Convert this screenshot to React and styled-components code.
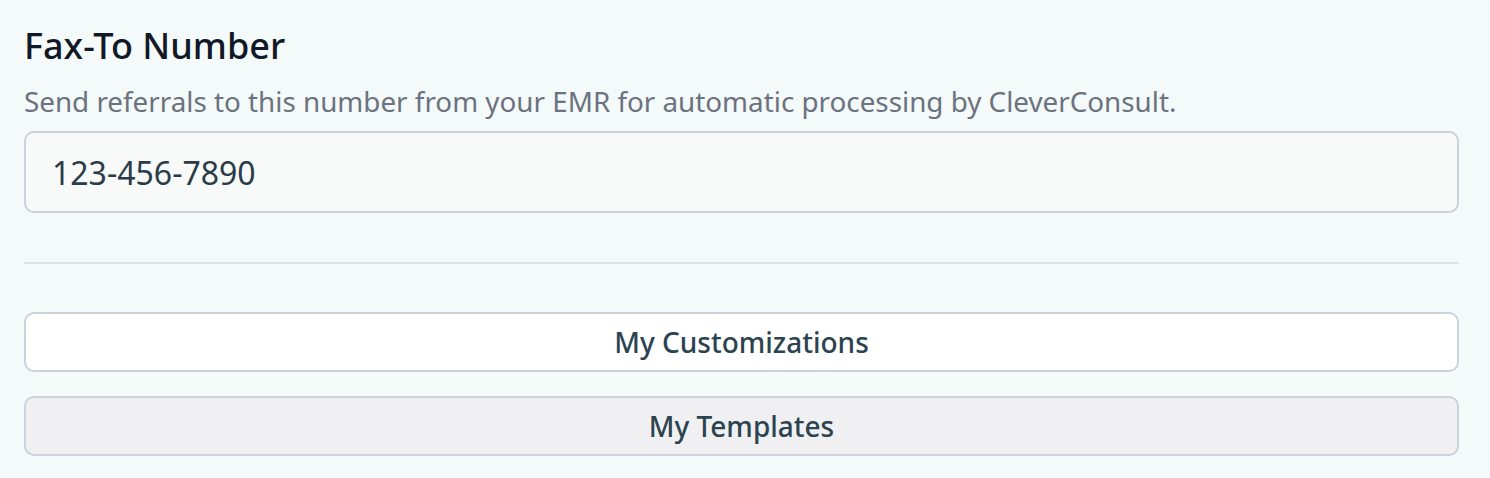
import React from "react";
import styled, { createGlobalStyle } from "styled-components";

const Global = createGlobalStyle`
  html, body { margin: 0; padding: 0; background: #f4f9f9; }
  body { font-family: "Noto Sans", "Open Sans", sans-serif; }
`;

const Page = styled.div`
  padding: 22px 31px 0 24px;
  display: flex;
  flex-direction: column;
`;

const Title = styled.h2`
  margin: 0;
  font-size: 36px;
  line-height: 48px;
  font-weight: 500;
  color: #111827;
`;

const Subtitle = styled.p`
  margin: 11px 0 0;
  font-size: 27.8px;
  line-height: 40px;
  color: #6b7280;
`;

const Field = styled.input`
  margin-top: 10px;
  box-sizing: border-box;
  height: 82px;
  width: 100%;
  border: 2px solid #cdd1d9;
  border-radius: 10px;
  background: #f8fafa;
  padding: 0 26px;
  font-family: inherit;
  font-size: 32px;
  color: #2b3c48;
  outline: none;
`;

const Divider = styled.hr`
  margin: 49px 0 48px;
  border: 0;
  height: 2px;
  background: #dfe2e5;
`;

const Actions = styled.div`
  display: flex;
  flex-direction: column;
  gap: 24px;
`;

const Button = styled.button`
  box-sizing: border-box;
  height: 60px;
  width: 100%;
  border: 2px solid #cdd1d9;
  border-radius: 10px;
  background: ${(p) => (p.$muted ? "#f0f0f3" : "#ffffff")};
  font-family: inherit;
  font-size: 28px;
  font-weight: 500;
  color: #2c4350;
  cursor: pointer;
`;

export default function App() {
  return (
    <>
      <Global />
      <Page>
        <Title>Fax-To Number</Title>
        <Subtitle>
          Send referrals to this number from your EMR for automatic processing by CleverConsult.
        </Subtitle>
        <Field defaultValue="123-456-7890" readOnly />
        <Divider />
        <Actions>
          <Button>My Customizations</Button>
          <Button $muted>My Templates</Button>
        </Actions>
      </Page>
    </>
  );
}
